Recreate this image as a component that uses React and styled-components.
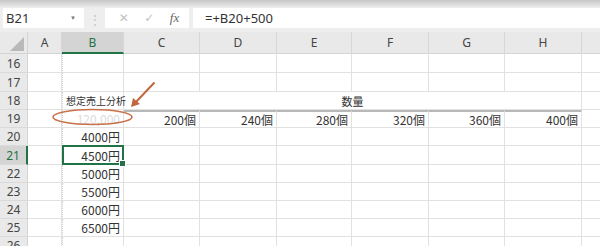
import React from 'react';
import styled, { createGlobalStyle, css } from 'styled-components';

const GlobalStyle = createGlobalStyle`
  html, body {
    margin: 0;
    padding: 0;
    background: #ffffff;
  }
  body {
    width: 600px;
    height: 246px;
    overflow: hidden;
    font-family: "Noto Sans CJK JP", "Noto Sans", sans-serif;
  }
`;

const EXCEL_GREEN = '#217346';
const GRID = '#e1e1e1';

const Page = styled.div`
  position: relative;
  width: 600px;
  height: 246px;
  overflow: hidden;
`;

const FormulaBar = styled.div`
  display: flex;
  align-items: stretch;
  height: 20px;
  padding: 8px 0 4px 3px;
  background: linear-gradient(#c6c6c6 0px, #e0e0e0 5px, #eeeeee 8px, #eeeeee 100%);
`;

const NameBox = styled.div`
  width: 81px;
  background: #fff;
  display: flex;
  align-items: center;
  justify-content: space-between;
  padding: 0 8px 0 3px;
  box-sizing: border-box;
  font-family: "Noto Sans", sans-serif;
  font-size: 13px;
  color: #333;
`;

const Caret = styled.span`
  font-size: 6px;
  color: #777;
`;

const Grip = styled.div`
  width: 21px;
  display: flex;
  align-items: center;
  justify-content: center;
  color: #c4c4c4;
  font-size: 12px;
  letter-spacing: -1px;
`;

const ButtonGroup = styled.div`
  width: 84px;
  background: #fff;
  display: flex;
  align-items: center;
  justify-content: space-around;
  padding: 0 2px 0 6px;
  box-sizing: border-box;
  margin-right: 4px;
`;

const BarButton = styled.span`
  font-family: "DejaVu Sans", sans-serif;
  font-size: 12px;
  color: ${({ $dim }) => ($dim ? '#c2c2c2' : '#666')};
  ${({ $italic }) =>
    $italic &&
    css`
      font-family: "Liberation Serif", serif;
      font-style: italic;
      font-size: 13px;
    `}
`;

const FormulaInput = styled.div`
  flex: 1;
  background: #fff;
  display: flex;
  align-items: center;
  padding-left: 12px;
  font-family: "Noto Sans", sans-serif;
  font-size: 13px;
  color: #333;
`;

const Sheet = styled.div`
  display: grid;
  grid-template-columns: 28px 34px 62px 76px 77px 75px 77px 76px 77px 40px;
  grid-template-rows: 22px 19px 19px 18px 18px 18px 19px 18px 18px 18px 18px 18px;
`;

const Corner = styled.div`
  background: #e9e9e9;
  border-right: 1px solid #d4d4d4;
  border-bottom: 1px solid #d4d4d4;
  box-sizing: border-box;
  display: flex;
  align-items: flex-end;
  justify-content: flex-end;
  padding: 0 2px 1px 0;
`;

const ColHead = styled.div`
  background: ${({ $active }) => ($active ? '#d4d4d4' : '#e9e9e9')};
  border-right: 1px solid #d7d7d7;
  border-bottom: ${({ $active }) => ($active ? `2px solid ${EXCEL_GREEN}` : '1px solid #d4d4d4')};
  box-sizing: border-box;
  display: flex;
  align-items: center;
  justify-content: center;
  font-family: "Noto Sans", sans-serif;
  font-size: 12px;
  color: ${({ $active }) => ($active ? EXCEL_GREEN : '#444')};
`;

const RowHead = styled.div`
  background: ${({ $active }) => ($active ? '#d4d4d4' : '#e9e9e9')};
  border-right: ${({ $active }) => ($active ? `2px solid ${EXCEL_GREEN}` : '1px solid #d4d4d4')};
  border-bottom: 1px solid #dadada;
  box-sizing: border-box;
  display: flex;
  align-items: center;
  justify-content: center;
  font-family: "Noto Sans", sans-serif;
  font-size: 12px;
  color: ${({ $active }) => ($active ? EXCEL_GREEN : '#444')};
`;

const Cell = styled.div`
  position: relative;
  border-right: 1px solid ${GRID};
  border-bottom: 1px solid ${GRID};
  box-sizing: border-box;
  display: flex;
  align-items: center;
  justify-content: ${({ $align }) =>
    $align === 'left' ? 'flex-start' : $align === 'center' ? 'center' : 'flex-end'};
  padding: 0 3px;
  font-size: ${({ $small }) => ($small ? '10px' : '12px')};
  color: ${({ $muted }) => ($muted ? '#dcdcdc' : '#333')};
  white-space: nowrap;
  ${({ $dotted }) =>
    $dotted &&
    css`
      border-left: 1px dotted #d2d2d2;
    `}
  ${({ $topRule }) =>
    $topRule &&
    css`
      border-top: 2px solid #b8b8b8;
    `}
  ${({ $selected }) =>
    $selected &&
    css`
      &::after {
        content: '';
        position: absolute;
        inset: -1px -1px -1px -1px;
        border: 2px solid ${EXCEL_GREEN};
      }
      &::before {
        content: '';
        position: absolute;
        right: -3px;
        bottom: -3px;
        width: 5px;
        height: 5px;
        background: ${EXCEL_GREEN};
        border: 1px solid #fff;
        z-index: 1;
      }
    `}
`;

const Overlay = styled.svg`
  position: absolute;
  top: 0;
  left: 0;
  pointer-events: none;
`;

const columns = ['A', 'B', 'C', 'D', 'E', 'F', 'G', 'H', ''];
const qty = ['200個', '240個', '280個', '320個', '360個', '400個'];
const prices = { 20: '4000円', 21: '4500円', 22: '5000円', 23: '5500円', 24: '6000円', 25: '6500円' };

function renderRow(r) {
  const cells = [<RowHead key="h" $active={r === 21}>{r}</RowHead>];
  cells.push(<Cell key="A" />);

  if (r === 18) {
    cells.push(<Cell key="B" $align="left" $small $dotted>想定売上分析</Cell>);
    cells.push(
      <Cell key="CH" $align="center" style={{ gridColumn: 'span 6', fontSize: 11 }}>
        数量
      </Cell>
    );
    cells.push(<Cell key="I" />);
    return cells;
  }

  if (r === 19) {
    cells.push(<Cell key="B" $muted $dotted>120,000</Cell>);
    qty.forEach((q) => cells.push(<Cell key={q} $topRule>{q}</Cell>));
    cells.push(<Cell key="I" />);
    return cells;
  }

  cells.push(
    <Cell key="B" $dotted $selected={r === 21}>
      {prices[r] || ''}
    </Cell>
  );
  for (let i = 0; i < 7; i++) cells.push(<Cell key={`c${i}`} />);
  return cells;
}

export default function App() {
  const rows = [16, 17, 18, 19, 20, 21, 22, 23, 24, 25, 26];
  return (
    <Page>
      <GlobalStyle />
      <FormulaBar>
        <NameBox>
          <span>B21</span>
          <Caret>▼</Caret>
        </NameBox>
        <Grip>⋮</Grip>
        <ButtonGroup>
          <BarButton $dim>✕</BarButton>
          <BarButton $dim>✓</BarButton>
          <BarButton $italic>fx</BarButton>
        </ButtonGroup>
        <FormulaInput>=+B20+500</FormulaInput>
      </FormulaBar>

      <Sheet>
        <Corner>
          <svg width="15" height="15" viewBox="0 0 15 15">
            <polygon points="14,0 14,14 0,14" fill="#b9b9b9" />
          </svg>
        </Corner>
        {columns.map((c, i) => (
          <ColHead key={i} $active={c === 'B'}>
            {c}
          </ColHead>
        ))}
        {rows.map((r) => (
          <React.Fragment key={r}>{renderRow(r)}</React.Fragment>
        ))}
      </Sheet>

      <Overlay width="600" height="246" viewBox="0 0 600 246">
        <ellipse cx="92.5" cy="117" rx="39.5" ry="7.5" fill="none" stroke="#c8714a" strokeWidth="1.6" />
        <line x1="154" y1="83" x2="135" y2="103" stroke="#c0673f" strokeWidth="2" strokeLinecap="round" />
        <polygon points="131,107 133,98 140,104" fill="#c0673f" />
      </Overlay>
    </Page>
  );
}
